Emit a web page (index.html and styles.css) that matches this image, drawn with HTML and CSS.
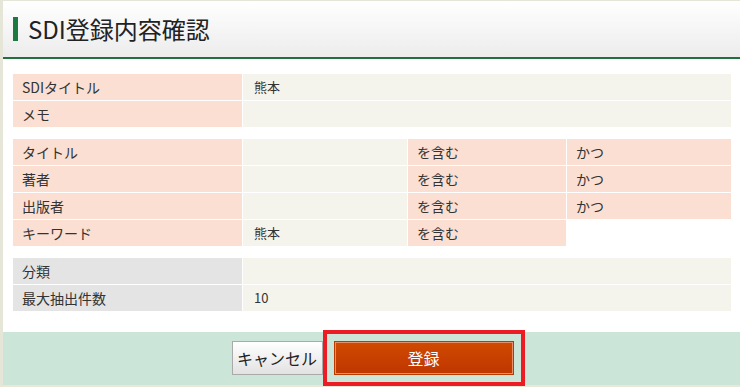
FILE: index.html
```html
<!DOCTYPE html>
<html lang="ja">
<head>
  <meta charset="utf-8">
  <title>SDI登録内容確認</title>
  <link rel="stylesheet" href="styles.css">
</head>
<body>

  <div class="page">
    <div class="head">
      <h1>SDI登録内容確認</h1>
    </div>

    <div class="content">
      <div class="grid two">
        <div class="label">SDIタイトル</div>
        <div class="value">熊本</div>
        <div class="label">メモ</div>
        <div class="value"></div>
      </div>

      <div class="grid four">
        <div class="label">タイトル</div>
        <div class="value"></div>
        <div class="label">を含む</div>
        <div class="label">かつ</div>

        <div class="label">著者</div>
        <div class="value"></div>
        <div class="label">を含む</div>
        <div class="label">かつ</div>

        <div class="label">出版者</div>
        <div class="value"></div>
        <div class="label">を含む</div>
        <div class="label">かつ</div>

        <div class="label">キーワード</div>
        <div class="value">熊本</div>
        <div class="label">を含む</div>
        <div class="empty"></div>
      </div>

      <div class="grid two">
        <div class="label gray">分類</div>
        <div class="value"></div>
        <div class="label gray">最大抽出件数</div>
        <div class="value">10</div>
      </div>
    </div>

    <div class="actions">
      <button class="btn cancel">キャンセル</button>
      <button class="btn submit">登録</button>
    </div>
  </div>

</body>
</html>
```

FILE: styles.css
```css
* {
  padding: 0;
  margin: 0;
  box-sizing: border-box;
}

body {
  background: #fff;
  font-family: "Noto Sans CJK JP", "Noto Sans", sans-serif;
  color: #333;
  font-size: 14px;
}

.page {
  border-left: 3px solid #e6e6d8;
  border-top: 1px solid #e6e6d8;
  border-bottom: 2px solid #ece6d8;
  height: 387px;
}

.head {
  height: 58px;
  background: linear-gradient(#fff, #ececec);
  border-bottom: 2px solid #21703d;
  padding: 16px 0 0 10px;
}

.head h1 {
  font-size: 24px;
  font-weight: normal;
  line-height: 26px;
  color: #222;
  border-left: 5px solid #1a7a40;
  padding-left: 10px;
  height: 24px;
  display: flex;
  align-items: center;
}

.content {
  padding: 15px 9px 21px 10px;
  display: flex;
  flex-direction: column;
  gap: 12px;
}

.grid {
  display: grid;
  gap: 1px;
  grid-auto-rows: 26px;
}

.two {
  grid-template-columns: 229px 1fr;
}

.four {
  grid-template-columns: 229px 164px 158px 1fr;
}

.label,
.value {
  display: flex;
  align-items: center;
  padding-left: 9px;
  line-height: 16px;
}

.label {
  background: #fadfd2;
}

.label.gray {
  background: #e4e4e4;
}

.value {
  background: #f4f4ec;
  padding-left: 11px;
  font-size: 13px;
}

.empty {
  background: #fff;
}

.actions {
  background: #cce5d9;
  height: 53px;
  display: flex;
  justify-content: center;
  align-items: center;
  gap: 11px;
  padding-left: 2px;
  padding-bottom: 1px;
}

.btn {
  height: 34px;
  font-family: "Noto Sans CJK JP", "Noto Sans", sans-serif;
  font-size: 16px;
  cursor: pointer;
}

.cancel {
  width: 91px;
  border: 1px solid #aaa;
  background: linear-gradient(#fff, #e2e2e2);
  color: #222;
}

.submit {
  width: 180px;
  border: 1px solid #b83a00;
  box-shadow: inset 0 0 0 1px #e8906a;
  background: linear-gradient(#d04a00, #c03600);
  color: #fff;
  outline: 4px solid #ec1c24;
  outline-offset: 7px;
}
```
